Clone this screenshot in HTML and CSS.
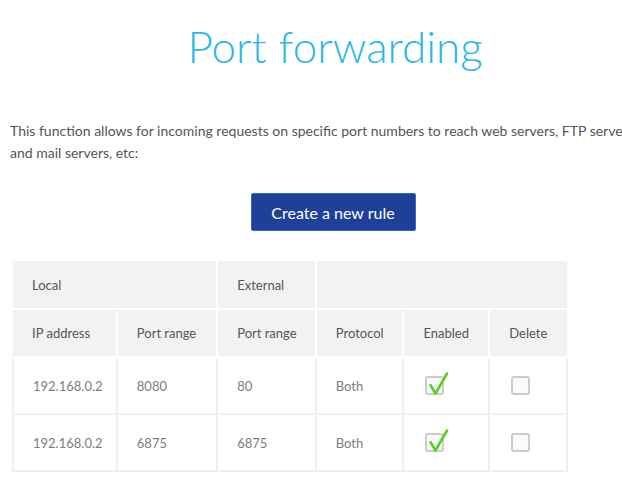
FILE: index.html
```html
<!DOCTYPE html>
<html>
<head>
<meta charset="utf-8">
<link rel="stylesheet" href="styles.css">
</head>
<body>
<div class="page">
  <h1 class="title">Port forwarding</h1>
  <p class="intro">This function allows for incoming requests on specific port numbers to reach web servers, FTP servers and mail servers, etc:</p>
  <div class="actions"><button class="btn">Create a new rule</button></div>
  <table class="rules">
    <thead>
      <tr class="group">
        <th colspan="2">Local</th>
        <th>External</th>
        <th colspan="3"></th>
      </tr>
      <tr class="cols">
        <th class="c1">IP address</th>
        <th class="c2">Port range</th>
        <th class="c3">Port range</th>
        <th class="c4">Protocol</th>
        <th class="c5">Enabled</th>
        <th class="c6">Delete</th>
      </tr>
    </thead>
    <tbody>
      <tr>
        <td>192.168.0.2</td>
        <td>8080</td>
        <td>80</td>
        <td>Both</td>
        <td><span class="box"><svg class="tick" width="24" height="26" viewBox="0 0 24 26"><path d="M3.5 13 L8.5 21.5 L20 1.5" fill="none" stroke="#5ccf26" stroke-width="2.6" stroke-linecap="round" stroke-linejoin="round"/></svg></span></td>
        <td><span class="box"></span></td>
      </tr>
      <tr>
        <td>192.168.0.2</td>
        <td>6875</td>
        <td>6875</td>
        <td>Both</td>
        <td><span class="box"><svg class="tick" width="24" height="26" viewBox="0 0 24 26"><path d="M3.5 13 L8.5 21.5 L20 1.5" fill="none" stroke="#5ccf26" stroke-width="2.6" stroke-linecap="round" stroke-linejoin="round"/></svg></span></td>
        <td><span class="box"></span></td>
      </tr>
    </tbody>
  </table>
</div>
</body>
</html>
```
FILE: styles.css
```css
html, body {
  margin: 0;
  padding: 0;
  background: #ffffff;
  overflow: hidden;
}
body {
  font-family: Lato, "Open Sans", "Liberation Sans", sans-serif;
  color: #555555;
}
.page {
  width: 650px;
  margin-left: 10px;
}
.title {
  margin: 0;
  padding-top: 18px;
  text-align: center;
  font-size: 44px;
  font-weight: 300;
  color: #2cb8e6;
  line-height: 56px;
}
.intro {
  margin: 46px 0 0 0;
  padding-right: 22px;
  font-size: 14px;
  line-height: 22px;
  color: #555555;
}
.actions {
  display: flex;
  justify-content: center;
  margin-top: 29px;
  padding-right: 4px;
}
.btn {
  width: 165px;
  height: 38px;
  background: #1f3f99;
  border: 1px solid #2e6ad6;
  border-radius: 2px;
  color: #ffffff;
  font-family: Lato, "Open Sans", sans-serif;
  font-size: 16px;
  padding: 0;
}
.rules {
  margin-top: 30px;
  margin-left: 2px;
  width: 556px;
  border-collapse: collapse;
  font-size: 13px;
}
.rules th {
  background: #f2f2f2;
  border: 2px solid #ffffff;
  text-align: left;
  font-weight: 400;
  color: #555555;
  padding: 0 0 0 19px;
  height: 46px;
}
.rules tr.group th {
  border-top: 0;
  height: 47px;
}
.rules thead th:first-child { border-left: 0; }
.rules thead th:last-child { border-right: 0; }
.c1 { width: 84px; }
.c2 { width: 80px; }
.c3 { width: 78px; }
.c4 { width: 67px; }
.c5 { width: 65px; }
.c6 { width: 58px; }
.rules td {
  border: 2px solid #f0f0f0;
  padding: 0 0 0 19px;
  height: 55px;
  color: #7d7d7d;
}
.box {
  position: relative;
  display: inline-block;
  width: 15px;
  height: 15px;
  border: 2px solid #cccccc;
  border-radius: 3px;
  background: #fafafa;
  vertical-align: middle;
  margin-left: 2px;
}
.tick {
  position: absolute;
  left: 0;
  top: -6px;
}
```
